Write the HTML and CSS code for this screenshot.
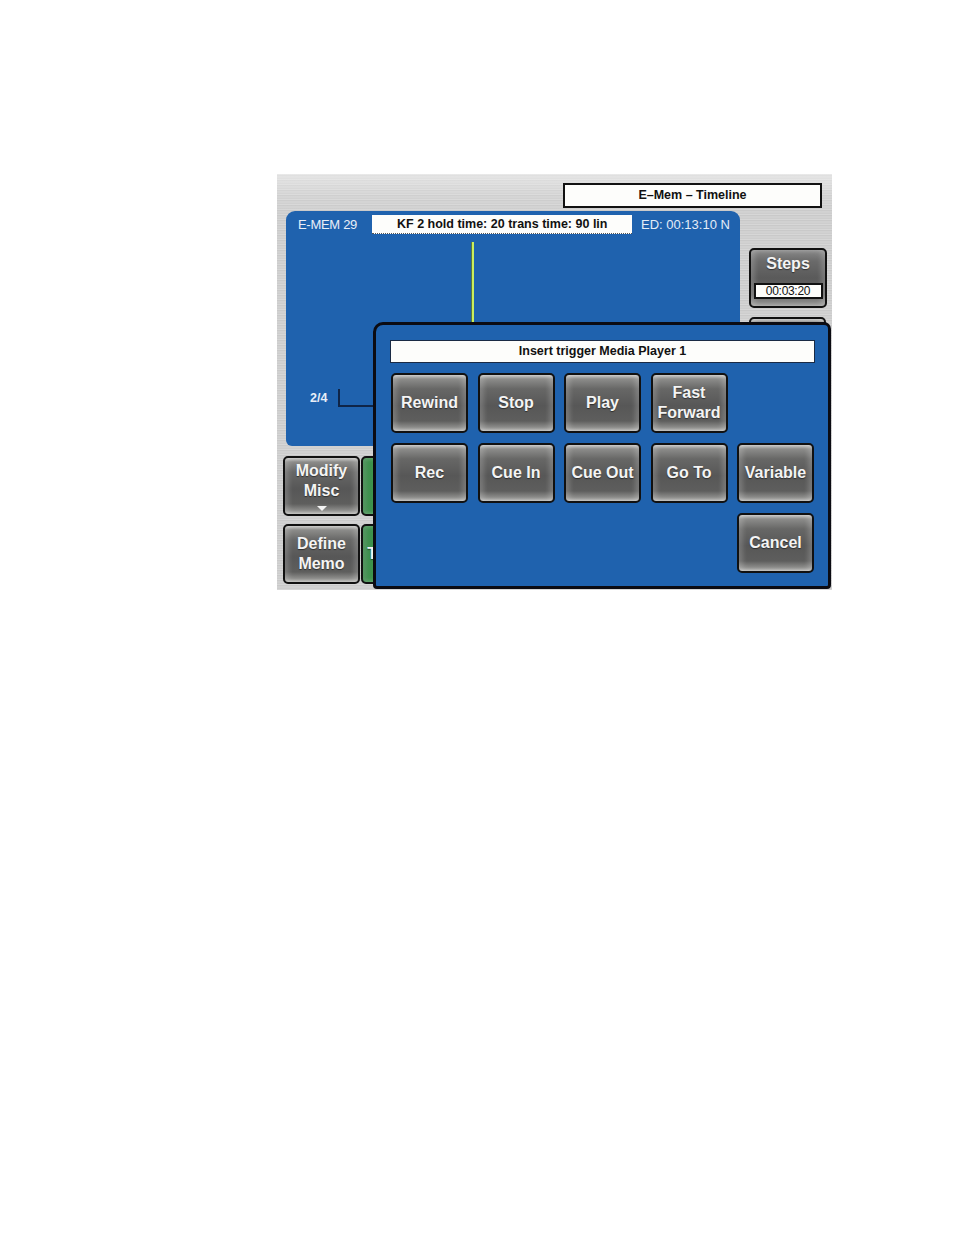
FILE: index.html
```html
<!DOCTYPE html>
<html lang="en">
<head>
    <meta charset="UTF-8">
    <meta name="viewport" content="width=device-width, initial-scale=1.0">
    <title>E-Mem - Timeline</title>
    <link rel="stylesheet" href="styles.css">
</head>
<body>
    <div class="page">
        <div class="screen">
            <div class="topbar">
                <div class="title-box">E&ndash;Mem &ndash; Timeline</div>
            </div>

            <div class="upper">
                <div class="panel">
                    <div class="panel-head">
                        <span class="emem">E-MEM 29</span>
                        <span class="kf-box">KF 2 hold time: 20 trans time: 90 lin</span>
                        <span class="ed">ED: 00:13:10 N</span>
                    </div>
                    <div class="track">
                        <div class="cursor"></div>
                        <div class="layer-row">
                            <span class="layer-label">2/4</span>
                            <span class="bracket"></span>
                        </div>
                    </div>
                </div>
                <div class="side">
                    <div class="btn steps">
                        <span class="steps-label">Steps</span>
                        <span class="time-box">00:03:20</span>
                    </div>
                    <div class="btn"></div>
                </div>
            </div>

            <div class="lower">
                <div class="btn">Modify<br>Misc<span class="arrow"></span></div>
                <div class="btn green"></div>
                <div class="btn">Define<br>Memo</div>
                <div class="btn green">Timeline</div>
            </div>

            <!-- trigger dialog sits over the timeline -->
            <div class="popup">
                <div class="popup-title">Insert trigger Media Player 1</div>
                <div class="popup-grid">
                    <div class="btn">Rewind</div>
                    <div class="btn">Stop</div>
                    <div class="btn">Play</div>
                    <div class="btn">Fast<br>Forward</div>
                    <div class="slot"></div>
                    <div class="btn">Rec</div>
                    <div class="btn">Cue In</div>
                    <div class="btn">Cue Out</div>
                    <div class="btn">Go To</div>
                    <div class="btn">Variable</div>
                    <div class="btn cancel">Cancel</div>
                </div>
            </div>
        </div>
    </div>
</body>
</html>
```

FILE: styles.css
```css
body {
    margin: 0;
    padding: 0;
    background-color: white;
    font-family: 'Liberation Sans', Arial, sans-serif;
}

.page {
    padding: 174px 0 0 277px;
}

.screen {
    position: relative;
    width: 555px;
    height: 416px;
    overflow: hidden;
    background:
        linear-gradient(180deg, rgba(255,255,255,0.45) 0, rgba(255,255,255,0.1) 22px, rgba(255,255,255,0) 40px),
        repeating-linear-gradient(180deg, #d7d7d7 0 1px, #c9c9c9 1px 2px, #d1d1d1 2px 4px, #cdcdcd 4px 5px);
}

.topbar {
    display: flex;
    justify-content: flex-end;
    padding: 9px 10px 0 0;
}

.title-box {
    box-sizing: border-box;
    width: 259px;
    height: 25px;
    border: 2px solid #111;
    background-color: #fdfdfb;
    font-size: 12.5px;
    font-weight: bold;
    line-height: 21px;
    text-align: center;
    color: #111;
}

.upper {
    display: flex;
    margin-top: 3px;
    padding-left: 9px;
}

.panel {
    display: flex;
    flex-direction: column;
    width: 454px;
    height: 235px;
    background-color: #1f62ae;
    border-radius: 9px 9px 6px 6px;
}

.panel-head {
    display: flex;
    align-items: center;
    height: 19px;
    margin-top: 4px;
    padding-left: 12px;
}

.emem {
    width: 74px;
    font-size: 13px;
    letter-spacing: -0.3px;
    color: #e8eef8;
}

.kf-box {
    box-sizing: border-box;
    width: 260px;
    height: 19px;
    padding-left: 25px;
    background-color: #fdfdfb;
    border-bottom: 1px dotted #555;
    font-size: 12.5px;
    font-weight: bold;
    line-height: 19px;
    color: #111;
    white-space: nowrap;
}

.ed {
    margin-left: 9px;
    font-size: 13px;
    color: #e4ecf7;
}

.track {
    position: relative;
    flex: 1;
}

.cursor {
    position: absolute;
    left: 185px;
    top: 8px;
    width: 2px;
    height: 120px;
    background-color: #c9ee5e;
    border-left: 1px solid #5d7a3a;
}

.layer-row {
    display: flex;
    align-items: center;
    margin-top: 155px;
    padding-left: 24px;
}

.layer-label {
    font-size: 12.5px;
    font-weight: bold;
    color: #e8eef8;
}

.bracket {
    box-sizing: border-box;
    width: 36px;
    height: 18px;
    margin-left: 11px;
    border-left: 2px solid #0f2548;
    border-bottom: 2px solid #0f2548;
}

.side {
    display: flex;
    flex-direction: column;
    gap: 9px;
    margin-left: 9px;
    padding-top: 37px;
}

.btn {
    box-sizing: border-box;
    display: flex;
    flex-direction: column;
    align-items: center;
    justify-content: center;
    width: 77px;
    height: 60px;
    border: 2px solid #111;
    border-radius: 5px;
    background: linear-gradient(180deg, #c4c4c2 0%, #8c8c8a 7%, #676766 25%, #575757 55%, #5e5e5d 82%, #8f8f8d 94%, #b9b9b6 100%);
    box-shadow: inset 4px 0 5px rgba(255,255,255,0.18), inset -4px 0 5px rgba(255,255,255,0.18);
    font-size: 16px;
    font-weight: bold;
    line-height: 20px;
    text-align: center;
    color: #f4f4f4;
    text-shadow: 0 1px 1px rgba(0,0,0,0.5);
}

.steps {
    width: 78px;
    justify-content: flex-start;
    padding-top: 3px;
    background: linear-gradient(180deg, #8a8a8a 0%, #6a6a6a 20%, #5a5a5a 50%, #666 80%, #9c9c9a 100%);
}

.steps-label {
    line-height: 22px;
}

.time-box {
    box-sizing: border-box;
    width: 69px;
    height: 16px;
    margin-top: 8px;
    border: 2px solid #111;
    background-color: #fdfdfb;
    font-size: 12px;
    font-weight: normal;
    line-height: 12px;
    letter-spacing: -0.3px;
    color: #111;
    text-shadow: none;
}

.lower {
    display: grid;
    grid-template-columns: 77px 77px;
    grid-template-rows: 62px 60px;
    column-gap: 1px;
    row-gap: 6px;
    margin-top: 10px;
    padding-left: 6px;
}

.arrow {
    width: 0;
    height: 0;
    margin-top: 5px;
    border-left: 5px solid transparent;
    border-right: 5px solid transparent;
    border-top: 5px solid #f4f4f4;
}

.green {
    background: linear-gradient(90deg, #2f7d3e 0%, #4cab5d 25%, #3b9a4d 60%, #2f7d3e 100%);
}

.popup {
    position: absolute;
    left: 96px;
    top: 148px;
    box-sizing: border-box;
    width: 458px;
    height: 267px;
    padding: 15px 0 0 14px;
    border: 3px solid #0b0b12;
    border-radius: 10px 7px 4px 4px;
    background-color: #1f62ae;
}

.popup-title {
    box-sizing: border-box;
    width: 425px;
    height: 23px;
    border: 1px solid #1a2a44;
    background-color: #fdfdfb;
    font-size: 12.5px;
    font-weight: bold;
    line-height: 21px;
    text-align: center;
    color: #111;
}

.popup-grid {
    display: grid;
    grid-template-columns: repeat(5, 77px);
    grid-auto-rows: 60px;
    column-gap: 9.5px;
    row-gap: 10px;
    margin: 10px 0 0 1px;
}

.cancel {
    grid-column: 5;
}
```
